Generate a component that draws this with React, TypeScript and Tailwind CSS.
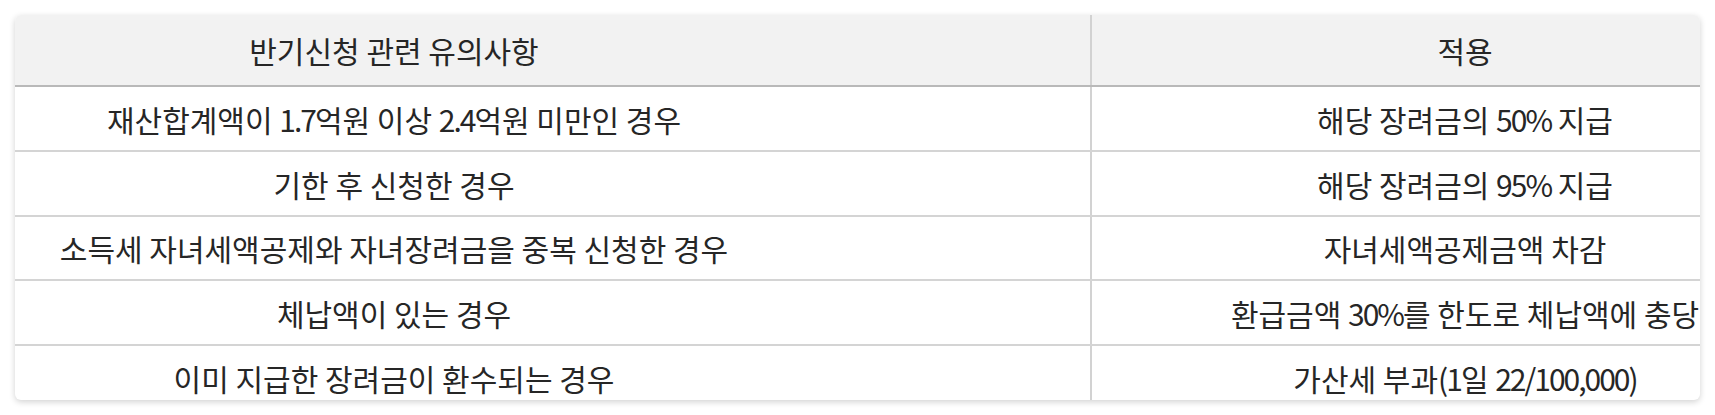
import React from "react";

const rows: { left: string; right: string; h: string }[] = [
  { left: "재산합계액이 1.7억원 이상 2.4억원 미만인 경우", right: "해당 장려금의 50% 지급", h: "h-[63px]" },
  { left: "기한 후 신청한 경우", right: "해당 장려금의 95% 지급", h: "h-[63px]" },
  { left: "소득세 자녀세액공제와 자녀장려금을 중복 신청한 경우", right: "자녀세액공제금액 차감", h: "h-[62px]" },
  { left: "체납액이 있는 경우", right: "환급금액 30%를 한도로 체납액에 충당", h: "h-[63px]" },
  { left: "이미 지급한 장려금이 환수되는 경우", right: "가산세 부과(1일 22/100,000)", h: "h-[63px]" },
];

function T({ text }: { text: string }) {
  const parts = text.split(/([0-9.,%/()]+)/);
  return (
    <span>
      {parts.map((p, i) =>
        /^[0-9.,%/()]+$/.test(p) ? (
          <span key={i} className="tracking-[-2px]">
            {p}
          </span>
        ) : (
          <React.Fragment key={i}>{p}</React.Fragment>
        )
      )}
    </span>
  );
}

export default function App() {
  return (
    <div
      className="w-[1715px] h-[415px] bg-white pt-[15px] pl-[15px] overflow-hidden"
      style={{ fontFamily: '"Noto Sans CJK KR", "Noto Sans", sans-serif' }}
    >
      <div className="w-[1685px] h-[385px] rounded-[6px] overflow-hidden bg-white shadow-[0_2px_6px_rgba(0,0,0,0.18)] text-[#262626] text-[30px] leading-none">
        <div className="flex h-[72px] bg-[#f2f2f2] border-b-2 border-[#b9b9b9]">
          <div className="w-[1077px] shrink-0 border-r-2 border-[#d2d2d2] flex items-center justify-center pr-[317px] whitespace-nowrap">
            <span>반기신청 관련 유의사항</span>
          </div>
          <div className="flex-1 flex items-center justify-center pl-[138px] whitespace-nowrap">
            <span>적용</span>
          </div>
        </div>
        {rows.map((r, i) => (
          <div key={i} className={`flex ${r.h} border-b-2 border-[#d4d4d4] box-content`}>
            <div className="w-[1077px] shrink-0 border-r-2 border-[#d2d2d2] flex items-center justify-center pr-[317px] whitespace-nowrap">
              <T text={r.left} />
            </div>
            <div className="flex-1 min-w-0 flex items-center justify-center pl-[138px] whitespace-nowrap">
              <span className="shrink-0">
                <T text={r.right} />
              </span>
            </div>
          </div>
        ))}
      </div>
    </div>
  );
}
